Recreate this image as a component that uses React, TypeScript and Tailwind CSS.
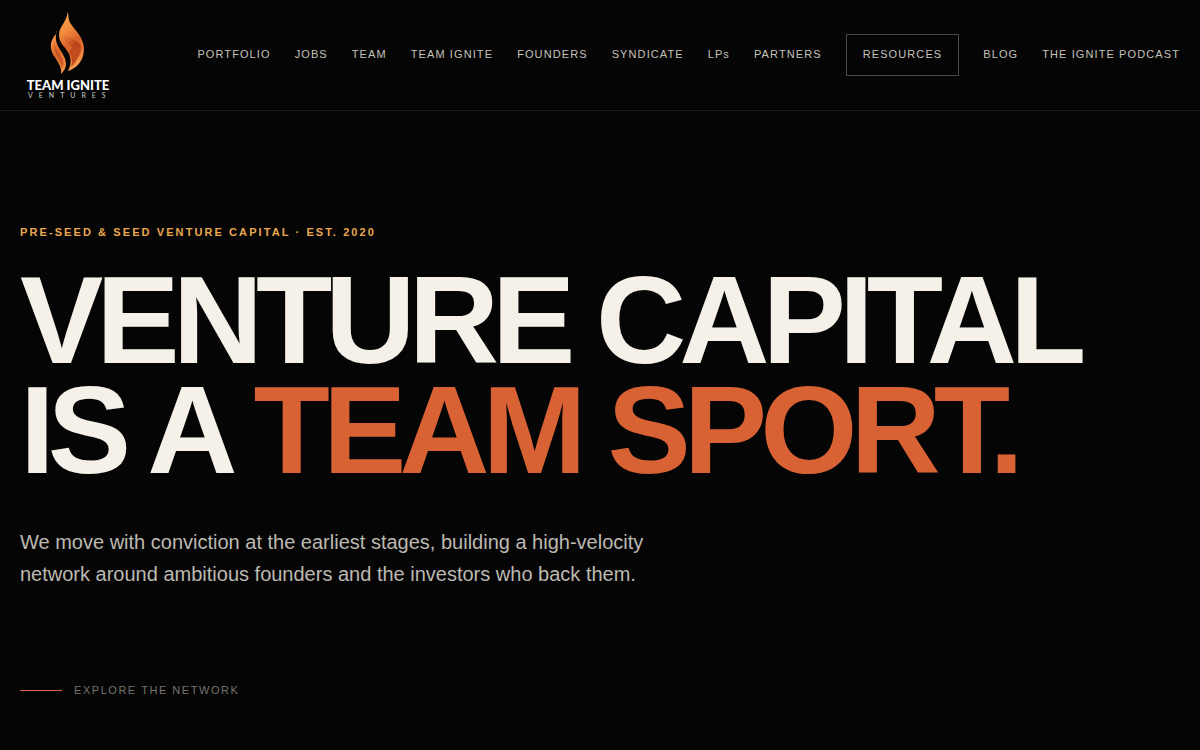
interface INavItem {
    label: string;
    href: string;
}

const navItems: INavItem[] = [
    { label: "PORTFOLIO", href: "#portfolio" },
    { label: "JOBS", href: "#jobs" },
    { label: "TEAM", href: "#team" },
    { label: "TEAM IGNITE", href: "#team-ignite" },
    { label: "FOUNDERS", href: "#founders" },
    { label: "SYNDICATE", href: "#syndicate" },
    { label: "LPs", href: "#lps" },
    { label: "PARTNERS", href: "#partners" },
];

const Flame = () => {
    return (
        <svg viewBox="0 0 36 64" className="w-9 h-16" aria-hidden="true">
            <defs>
                <linearGradient id="outer" x1="0.3" y1="0" x2="0.6" y2="1">
                    <stop offset="0" stopColor="#f9a04c" />
                    <stop offset="0.3" stopColor="#f08a3c" />
                    <stop offset="0.55" stopColor="#d9602a" />
                    <stop offset="0.78" stopColor="#f0813a" />
                    <stop offset="1" stopColor="#f9a556" />
                </linearGradient>
                <linearGradient id="left" x1="0.2" y1="0" x2="0.7" y2="1">
                    <stop offset="0" stopColor="#f7a052" />
                    <stop offset="0.5" stopColor="#df672c" />
                    <stop offset="1" stopColor="#f39147" />
                </linearGradient>
                <linearGradient id="fold" x1="0" y1="0" x2="1" y2="1">
                    <stop offset="0" stopColor="#f08a3c" stopOpacity="0" />
                    <stop offset="0.6" stopColor="#b9431b" />
                    <stop offset="1" stopColor="#cf5423" />
                </linearGradient>
            </defs>
            <path
                fill="url(#outer)"
                d="M17.5 1C19 5 18 9 21 13C25 19 31 24 33 32C36 43 31 56 18 60C21 54 22 48 18 41C15 36 9 32 9 24C9 15 17 11 17.5 1Z"
            />
            <path
                fill="url(#fold)"
                d="M10 21C15 27 25 27 30 33C33 38 30 44 27 48C28 37 15 34 10 21Z"
            />
            <path
                fill="#c24a1f"
                d="M19 42C20 36 25 34 28 38C30 44 26 52 21 56C23 50 22 46 19 42Z"
            />
            <path
                fill="url(#left)"
                d="M7 19C5 26 6 31 8 35C11 41 16 46 16 53C16 57 14 60 11 63C12 56 8 51 4 45C0 39 0 32 3 27C5 24 7 23 7 19Z"
            />
            <path
                fill="#b9431b"
                opacity="0.6"
                d="M4 32C5 39 12 44 13 50C14 53 13 55 12 57C11 49 3 42 4 32Z"
            />
        </svg>
    );
};

const Logo = () => {
    return (
        <a href="#home" className="w-24 shrink-0 flex flex-col items-center text-white">
            <Flame />
            <span className="mt-1 font-[Lato,sans-serif] font-black text-[13px] leading-3 whitespace-nowrap">
                TEAM IGNITE
            </span>
            <span className="w-20 font-[Lato,sans-serif] text-[7px] leading-2 text-[#c8c8c8] tracking-[6px]">
                VENTURES
            </span>
        </a>
    );
};

const Header = () => {
    return (
        <header className="flex items-center justify-between h-[111px] px-5 border-b border-[#1c1c1c]">
            <Logo />
            <nav className="flex items-center gap-6 text-[11px] leading-4 tracking-[0.1em] whitespace-nowrap text-[#c6c2ba]">
                {navItems.map((item) => (
                    <a key={item.href} href={item.href} className="pb-0.5">
                        {item.label}
                    </a>
                ))}
                <button className="px-4 pt-[11px] pb-[13px] border border-[#484848] tracking-[0.1em]">
                    RESOURCES
                </button>
                <a href="#blog" className="pb-0.5">
                    BLOG
                </a>
                <a href="#podcast" className="pb-0.5">
                    THE IGNITE PODCAST
                </a>
            </nav>
        </header>
    );
};

const Hero = () => {
    return (
        <section className="px-5 pt-[113px] pb-12">
            <p className="text-[11px] leading-4 font-bold tracking-[0.19em] text-[#eaa850]">
                PRE-SEED &amp; SEED VENTURE CAPITAL · EST. 2020
            </p>
            <h1 className="mt-[25px] text-[125px] leading-[110px] font-bold tracking-[-7px] text-[#f5f0e8]">
                VENTURE CAPITAL
                <br />
                IS A <span className="text-[#d96235]">TEAM SPORT.</span>
            </h1>
            <p className="mt-[41px] max-w-[680px] text-[20px] leading-8 text-[#bdb9b1]">
                We move with conviction at the earliest stages, building a high-velocity
                network around ambitious founders and the investors who back them.
            </p>
            <a
                href="#network"
                className="mt-23 flex w-fit items-center gap-3 text-[11px] leading-[17px] tracking-[0.14em] text-[#77746f]"
            >
                <span className="w-[42px] h-px bg-[#d9604f]" />
                EXPLORE THE NETWORK
            </a>
        </section>
    );
};

const App = () => {
    return (
        <div className="min-h-screen bg-[#050505] font-['Liberation_Sans',Arial,sans-serif]">
            <Header />
            <Hero />
        </div>
    );
};

export default App;
